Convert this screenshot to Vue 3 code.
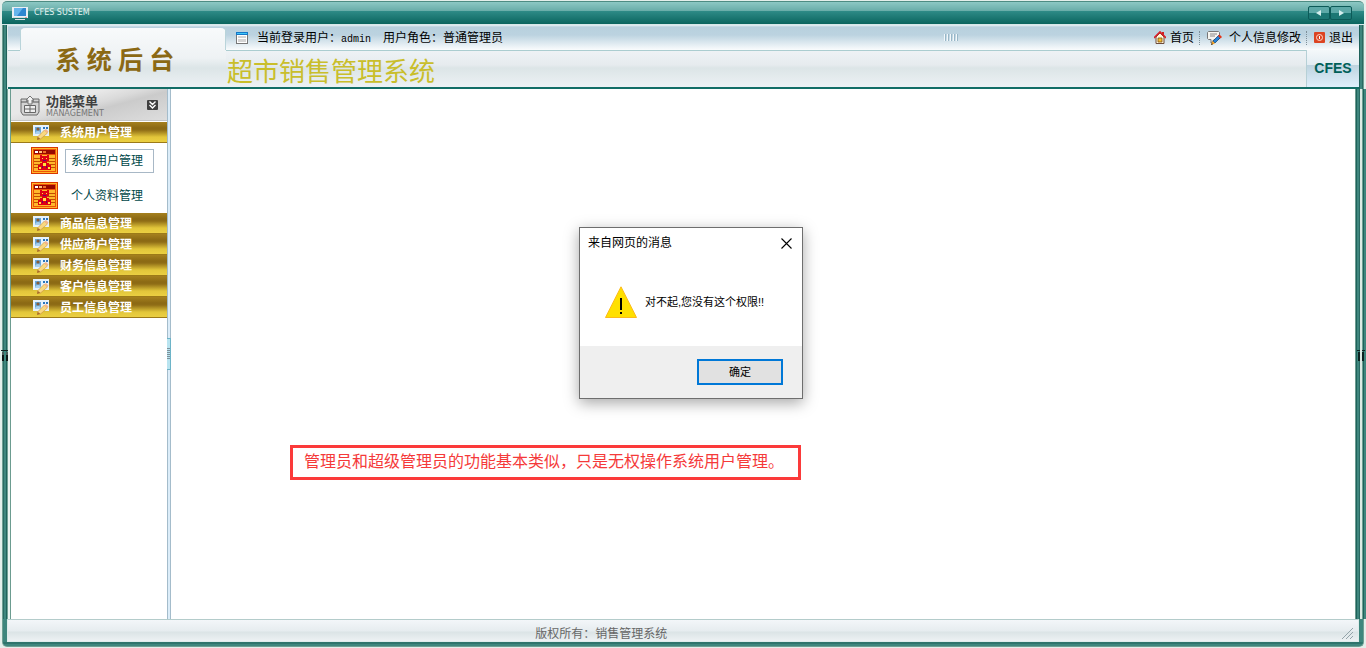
<script setup>
import { ref } from 'vue'

const groups = [
  { name: '系统用户管理', items: ['系统用户管理', '个人资料管理'] },
  { name: '商品信息管理', items: [] },
  { name: '供应商户管理', items: [] },
  { name: '财务信息管理', items: [] },
  { name: '客户信息管理', items: [] },
  { name: '员工信息管理', items: [] },
]
const openGroup = ref('系统用户管理')
const active = ref('系统用户管理')
const alertOpen = ref(true)
</script>

<template>
  <div class="page">
    <div class="titlebar">
      <svg class="monitor" viewBox="0 0 16 13" width="16" height="13" aria-hidden="true">
        <path d="M0 0h16v11H0z" fill="#e9eef4" />
        <path d="M2 1h12v8H2z" fill="#2f86d0" />
        <path d="M2 1h9L5 9H2z" fill="#66b4ec" />
        <path d="M1 10h12v1H1z" fill="#d8dde0" />
        <path d="M13 10h2v1h-2z" fill="#e49a9a" />
        <path d="M3 12h10v1H3z" fill="#d9dfe6" />
      </svg>
      <span class="brand">CFES SUSTEM</span>
      <div class="nav">
        <button type="button" aria-label="后退">
          <svg viewBox="0 0 8 8" width="8" height="8"><path d="M6 1v6L1 4z" fill="#d5eeee" /></svg>
        </button>
        <button type="button" aria-label="前进">
          <svg viewBox="0 0 8 8" width="8" height="8"><path d="M2 1v6l5-3z" fill="#d5eeee" /></svg>
        </button>
      </div>
    </div>

    <header class="head-row">
      <div class="edge left"></div>
      <div class="head">
        <div class="logo">系 统 后 台</div>
        <div class="head-main">
          <div class="toolbar">
            <svg class="win" viewBox="0 0 12 12" width="12" height="12" aria-hidden="true">
              <path d="M0 0h12v12H0z" fill="#777" />
              <path d="M1 3h10v8H1z" fill="#fff" />
              <path d="M0 0h12v3H0z" fill="#1577c8" />
              <path d="M1 1h10v1H1z" fill="#3ec6f8" />
              <path d="M2 4h8v2H2zM2 7h8v3H2z" fill="#d4d4d4" />
            </svg>
            <span class="who">当前登录用户：<span class="mono">admin</span></span>
            <span class="role">用户角色：普通管理员</span>
            <span class="grip"></span>
            <nav class="links">
              <a href="#">
                <svg viewBox="0 0 12 13" width="12" height="13" aria-hidden="true">
                  <path d="M8 1h2v4H8z" fill="#c22" />
                  <path d="M2 6v6.500h8V6L6 2z" fill="#fff6d8" stroke="#6c4a3a" />
                  <path d="M0 7l6-6 6 6" fill="none" stroke="#d8202a" stroke-width="1.700" />
                  <path d="M4 7h4v4H4z" fill="#f6bf2a" stroke="#80521a" stroke-width=".8" />
                </svg>首页</a>
              <i class="dots"></i>
              <a href="#" class="edit">
                <svg viewBox="0 0 15 14" width="15" height="14" aria-hidden="true">
                  <path d="M1.500.5h10l1 1v6l-1 1H7L4 12V8.500H1.500l-1-1v-6z" fill="#f5f5f0" stroke="#777" />
                  <path d="M3 3h7M3 5h5" stroke="#888" />
                  <path d="M6 10l6-6 2 2-6 6z" fill="#2382d8" stroke="#153f68" stroke-width=".7" />
                  <path d="M11 5l1.500-1.500L15 6l-1.500 1.500z" fill="#e43418" />
                  <path d="M4 14l1.500-4L8 12.500z" fill="#f4a020" />
                  <path d="M4 14l.7-2 1.300 1.300z" fill="#222" />
                </svg>个人信息修改</a>
              <i class="dots"></i>
              <a href="#">
                <svg viewBox="0 0 11 11" width="11" height="11" aria-hidden="true">
                  <rect width="11" height="11" rx="1" fill="#dc4422" />
                  <circle cx="5.500" cy="5.500" r="3" fill="none" stroke="#ffd9cc" />
                  <path d="M5.500 4v3" stroke="#fff" />
                </svg>退出</a>
            </nav>
          </div>
          <div class="title-row">
            <h1>超市销售管理系统</h1>
            <strong class="cfes">CFES</strong>
          </div>
        </div>
      </div>
      <div class="edge right"></div>
    </header>

    <div class="middle">
      <div class="rail rail-left">
        <svg viewBox="0 0 8 12" width="8" height="12" aria-hidden="true">
          <path d="M1 0h8v1H1z" fill="#12201f" />
          <path d="M2 2h2v9H2zM6 2h2v9H6z" fill="#0d1716" />
          <path d="M2 2h2v3H2zM6 2h2v3H6z" fill="#4a5a58" />
        </svg>
      </div>
      <aside>
        <div class="menu-head">
          <svg viewBox="0 0 20 21" width="20" height="21" aria-hidden="true">
            <path d="M1 4h6v3h6V4h6v13l-2 3H3l-2-3z" fill="#d4d4d4" stroke="#686868" />
            <path d="M10 1l4 4h-2v4H8V5H6z" fill="#f3f3f3" stroke="#777" />
            <path d="M4.500 10.500h11v7h-11zM4 14h12M10 10v8" fill="#eee" stroke="#666" />
            <path d="M1 7h6M13 7h6" stroke="#555" />
          </svg>
          <div class="menu-title">
            <b>功能菜单</b>
            <small>MANAGEMENT</small>
          </div>
          <button type="button" class="collapse" aria-label="收起菜单">
            <svg viewBox="0 0 11 10" width="11" height="10">
              <rect width="11" height="10" rx="1" fill="#404040" />
              <path d="M2.500 1.500l3 3 3-3M2.500 5l3 3 3-3" fill="none" stroke="#fff" stroke-width="1.400" />
            </svg>
          </button>
        </div>

        <template v-for="g in groups" :key="g.name">
          <button type="button" class="group" @click="openGroup = g.name">
            <svg viewBox="0 0 16 15" width="16" height="15" aria-hidden="true">
              <path d="M0 0h16v11H0z" fill="#e6f2fb" />
              <path d="M2 2h6v7H2z" fill="#69a8da" />
              <circle cx="5" cy="4" r="1.600" fill="#865c38" />
              <path d="M2 9c0-4 6-4 6 0z" fill="#a9d0ee" />
              <path d="M10 2h2v2h-2zM13 2h2v2h-2z" fill="#2c76bd" />
              <path d="M4.500 12l7-7 3 3-7 6z" fill="#f8d880" stroke="#d09a42" stroke-width=".7" />
              <path d="M11 5.500l2-1.500 2.500 2.500L14 8z" fill="#f2b48c" />
              <path d="M4 15l.5-3 3 2z" fill="#a8682c" />
            </svg>
            <span>{{ g.name }}</span>
          </button>
          <ul v-if="openGroup === g.name && g.items.length">
            <li v-for="item in g.items" :key="item">
              <svg viewBox="0 0 27 27" width="27" height="27" aria-hidden="true">
                <path d="M0 0h27v27H0z" fill="#d93600" />
                <path d="M1 1h25v25H1z" fill="#ffb62a" />
                <path d="M2 2h23v23H2z" fill="#ee5208" />
                <path d="M3 8h21v16H3z" fill="#ffb82c" />
                <path d="M3 3h21v4H3z" fill="#970800" />
                <path d="M4 4h3v2H4z" fill="#fff" />
                <path d="M8 4h3v2H8z" fill="#ffc078" />
                <path d="M12 4h3v2h-3z" fill="#f07028" />
                <path d="M3 11.500h21M3 14.500h21M3 17.500h21M3 20.500h21" stroke="#c24e00" />
                <path d="M9 8h2v1h5V8h2v6h-2v2h2v2h2v5H7v-5h2v-2h2v-2H9z" fill="#df0014" />
                <path d="M11 11h1v1h-1zM15 11h1v1h-1zM12 16h3v3h-3zM8 20h2v2H8zM17 20h2v2h-2z" fill="#ffe33e" />
                <path d="M12 13h3v1h-3zM11 19h1v2h-1zM15 19h1v2h-1z" fill="#70006a" />
              </svg>
              <a href="#" :class="{ on: active === item }" @click.prevent="active = item">{{ item }}</a>
            </li>
          </ul>
        </template>
      </aside>
      <div class="divider"><span></span></div>
      <main></main>
      <div class="rail rail-right">
        <svg viewBox="0 0 8 12" width="8" height="12" aria-hidden="true">
          <path d="M0 0h3v1H0zM5 0h3v1H5zM1 2h2v9H1zM5 2h2v9H5z" fill="#0b2220" />
        </svg>
      </div>
    </div>

    <footer class="foot-row">
      <div class="foot">
        <span>版权所有：销售管理系统</span>
        <svg viewBox="0 0 12 12" width="12" height="12" aria-hidden="true">
          <path d="M0 11L11 0M4 11l7-7M8 11l3-3" stroke="#94a4aa" fill="none" />
        </svg>
      </div>
    </footer>

    <p class="note">管理员和超级管理员的功能基本类似，只是无权操作系统用户管理。</p>

    <section v-if="alertOpen" class="alert" role="alertdialog" aria-labelledby="alert-title" aria-describedby="alert-text">
      <div class="alert-top">
        <span id="alert-title">来自网页的消息</span>
        <button type="button" aria-label="关闭" @click="alertOpen = false">
          <svg viewBox="0 0 11 11" width="11" height="11"><path d="M.5.5l10 10M10.500.5l-10 10" stroke="#000" stroke-width="1.100" /></svg>
        </button>
      </div>
      <div class="alert-body">
        <svg viewBox="0 0 32 32" width="32" height="32" aria-hidden="true">
          <path d="M16 .8L31.500 31.500H.5z" fill="#ffe000" stroke="#fcba19" />
          <path d="M15 12h2v12h-2zM15 26h2v2h-2z" fill="#000" />
        </svg>
        <span id="alert-text">对不起,您没有这个权限!!</span>
      </div>
      <div class="alert-foot">
        <button type="button" @click="alertOpen = false">确定</button>
      </div>
    </section>
  </div>
</template>

<style>
body {
  margin: 0;
  background: #e4efeb;
}
</style>

<style scoped>
.page {
  position: relative;
  box-sizing: border-box;
  display: flex;
  flex-direction: column;
  min-height: 100vh;
  padding: 1px 0;
  font: 12px/16px "Liberation Sans", "Noto Sans CJK SC", sans-serif;
  color: #000;
}
button {
  padding: 0;
  border: 0;
  background: none;
  font: inherit;
  color: inherit;
}
a {
  color: inherit;
  text-decoration: none;
}
svg {
  display: block;
  flex: none;
}
.titlebar {
  display: flex;
  align-items: center;
  box-sizing: border-box;
  height: 24px;
  margin: 0 2px;
  padding: 0 12px 0 10px;
  border-top: 1px solid #4d8c83;
  border-bottom: 1px solid #d6e8ea;
  border-radius: 5px 5px 0 0;
  background: linear-gradient(#8cc8c4 0, #68aca8 9px, #2e8b87 9px, #0b655f 100%);
}
.brand {
  margin-left: 6px;
  font: 8px/12px "DejaVu Sans", sans-serif;
  color: #e3f3f1;
}
.nav {
  display: flex;
  margin-left: auto;
}
.nav button {
  display: flex;
  align-items: center;
  justify-content: center;
  box-sizing: border-box;
  width: 22px;
  height: 14px;
  border: 1px solid #0c5a58;
  border-radius: 2px;
  background: linear-gradient(#5da9a8 50%, #1c7774 50%);
}
.head-row {
  display: flex;
  height: 64px;
}
.edge.left {
  width: 8px;
  background: linear-gradient(90deg, #e4efeb 2px, #6f9f93 2px 3px, #2a6a62 3px 4px, #3e867d 4px 6px, #1f625b 6px 7px, #dfeceb 7px);
}
.edge.right {
  width: 7px;
  background: linear-gradient(90deg, #1f625b 1px, #3e867d 1px 3px, #2a6a62 3px 4px, #6f9f93 4px 5px, #e4efeb 5px);
}
.head {
  flex: 1;
  display: flex;
  border-bottom: 2px solid #126d66;
  background:
    linear-gradient(#e8f0f4 0, #b8d0de 2px, #bcd3e0 10px, #fafcfd 25px, #abcdd0 25px, #abcdd0 26px, transparent 26px),
    linear-gradient(#eef2f5 26px, #e6ebee 40px, #dce5e7 43px, #edf1f4 100%);
}
.logo {
  box-sizing: border-box;
  width: 206px;
  margin: 3px 0 0 12px;
  padding: 18px 16px 0 0;
  border: 1px solid #b9d4da;
  border-width: 0 1px;
  border-image: linear-gradient(#b9d4da 22px, transparent 22px) 1;
  border-radius: 5px 5px 0 0;
  background: linear-gradient(#f8fafb 0, #eef2f4 30px, #dce5e7 40px, #edf1f4 100%);
  text-align: center;
  font: bold 25px/30px "Liberation Serif", "Noto Sans CJK SC", serif;
  color: #8b6914;
}
.head-main {
  flex: 1;
  display: flex;
  flex-direction: column;
}
.toolbar {
  display: flex;
  align-items: center;
  box-sizing: border-box;
  height: 25px;
  padding: 1px 6px 0 10px;
  margin-bottom: 1px;
}
.who {
  margin-left: 9px;
}
.mono {
  font: 10px/12px "Liberation Mono", monospace;
}
.role {
  margin-left: 12px;
}
.grip {
  width: 15px;
  height: 7px;
  margin-left: auto;
  margin-right: 195px;
  background: repeating-linear-gradient(90deg, #f2f7fa 0 1px, #98b7c8 1px 2px, transparent 2px 3px);
}
.links {
  display: flex;
  align-items: center;
}
.links a {
  display: flex;
  align-items: center;
  gap: 4px;
}
.links .edit {
  gap: 7px;
}
.dots {
  height: 14px;
  margin: 0 7px 0 5px;
  border-left: 1px dotted #7d8f99;
}
.title-row {
  flex: 1;
  display: flex;
  justify-content: space-between;
}
h1 {
  margin: 3px 0 0 1px;
  font: 26px/36px "Noto Sans CJK SC", sans-serif;
  line-height: 34px;
  color: #c9be2b;
}
.cfes {
  box-sizing: border-box;
  width: 53px;
  border-left: 1px solid #b6d0d6;
  background: linear-gradient(#f4f8fa 0, #e2ecf2 15px, #bdd3df 15px, #e0f0fc 100%);
  text-align: center;
  font: bold 14px/36px "Liberation Sans", sans-serif;
  color: #005f58;
}
.middle {
  flex: 1;
  display: flex;
}
.rail {
  display: flex;
  align-items: center;
  box-sizing: border-box;
  width: 11px;
  padding-top: 4px;
}
.rail-left {
  background: linear-gradient(90deg, #e4efeb 2px, #6f9f93 2px 3px, #2a6a62 3px 4px, #3e867d 4px 6px, #1f625b 6px 7px, #6f9f93 7px 8px, #eaf3f0 8px 10px, #6c9c90 10px);
}
.rail-right {
  justify-content: center;
  background: linear-gradient(90deg, #6c9c90 1px, #1f625b 1px 2px, #3e867d 2px 4px, #2a6a62 4px 5px, #dcebe4 5px 7px, #6f9f93 7px 8px, #1f625b 8px 9px, #3e867d 9px);
}
aside {
  width: 156px;
  background: #fff;
}
.menu-head {
  display: flex;
  align-items: center;
  box-sizing: border-box;
  height: 33px;
  padding: 0 9px;
  border-bottom: 1px solid #fff;
  background: linear-gradient(165deg, #e8e8e8 0 35%, #dadada 50%, #cbcbcb 60%, #dedede 100%);
  box-shadow: inset 0 -1px #c4c4c4;
}
.menu-title {
  display: flex;
  flex-direction: column;
  margin-left: 6px;
  color: #404040;
}
.menu-title b {
  font: bold 13px/18px "Noto Sans CJK SC", sans-serif;
}
.menu-title small {
  font: 8px/8px "DejaVu Sans", sans-serif;
  color: #777;
}
.collapse {
  margin-left: auto;
}
.group {
  display: flex;
  align-items: center;
  gap: 11px;
  box-sizing: border-box;
  width: 100%;
  height: 21px;
  padding: 1px 0 0 22px;
  border-bottom: 1px solid #9c7a18;
  background: linear-gradient(#a5801e 0, #8b6914 6px, #8f6d16 8px, #e2c63a 15px, #ebcf42 100%);
  font-weight: bold;
  color: #fff;
}
ul {
  margin: 0;
  padding: 0;
  list-style: none;
}
li {
  display: flex;
  align-items: center;
  gap: 7px;
  height: 35px;
  padding-left: 20px;
}
li a {
  padding: 3px 5px;
  border: 1px solid transparent;
  width: 77px;
  color: #00484a;
}
li a.on {
  border-color: #a8b8c6;
}
.divider {
  display: flex;
  align-items: center;
  box-sizing: border-box;
  width: 4px;
  border: 1px solid #a4bccb;
  border-width: 0 1px;
  background: #dcedf9;
}
.divider span {
  flex: none;
  box-sizing: border-box;
  width: 4px;
  height: 32px;
  margin-left: -1px;
  border: 1px solid #6db4c8;
  border-left-width: 0;
  background: repeating-linear-gradient(#7e929c 0 1px, transparent 1px 2px) 0 9px / 3px 11px no-repeat #b9e4f0;
}
main {
  flex: 1;
  background: #fff;
}
.foot-row {
  margin: 0 2px;
  padding: 0 4px 4px;
  border: 1px solid #6f9f93;
  border-top: 0;
  border-radius: 0 0 5px 5px;
  background: linear-gradient(#3e867d 23px, #1f625b 24px, #3e867d 25px);
}
.foot {
  display: flex;
  align-items: center;
  justify-content: space-between;
  box-sizing: border-box;
  height: 23px;
  padding: 6px 4px 0 39%;
  border: 1px solid #dfeceb;
  border-top-color: #b4cccb;
  background: linear-gradient(#f3f6f9 0, #e6ecef 11px, #dbe4e6 12px, #edf1f3 100%);
  color: #666;
}
.note {
  position: absolute;
  left: 290px;
  top: 445px;
  box-sizing: border-box;
  width: 511px;
  margin: 0;
  padding: 0 11px 5px;
  border: 3px solid #fb3a3a;
  font: 16px/24px "Noto Sans CJK SC", sans-serif;
  white-space: nowrap;
  color: #f53a3a;
}
.alert {
  position: absolute;
  left: 579px;
  top: 227px;
  box-sizing: border-box;
  width: 224px;
  border: 1px solid #6e6e6e;
  background: #fff;
  box-shadow: 0 4px 14px rgba(0, 0, 0, 0.35);
}
.alert-top {
  display: flex;
  align-items: center;
  justify-content: space-between;
  height: 30px;
  padding: 0 10px 0 8px;
}
.alert-body {
  display: flex;
  align-items: center;
  gap: 8px;
  height: 88px;
  padding-left: 25px;
  font-size: 11px;
}
.alert-foot {
  display: flex;
  justify-content: flex-end;
  padding: 13px 19px;
  background: #efefef;
}
.alert-foot button {
  width: 86px;
  height: 26px;
  border: 2px solid #0078d7;
  background: #e1e1e1;
  font-size: 11px;
}
</style>
